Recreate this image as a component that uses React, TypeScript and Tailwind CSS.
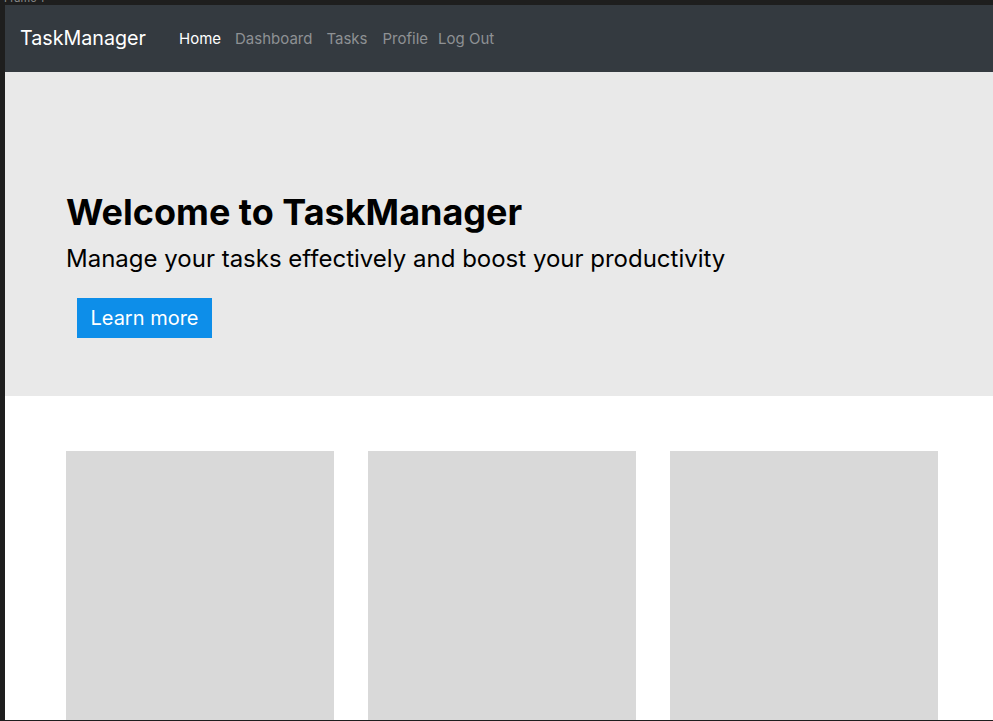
import React from "react";

export default function App() {
  const links = [
    { label: "Home", active: true, cls: "mr-[14px]" },
    { label: "Dashboard", active: false, cls: "mr-[14px]" },
    { label: "Tasks", active: false, cls: "mr-[15px]" },
    { label: "Profile", active: false, cls: "mr-[10px]" },
    { label: "Log Out", active: false, cls: "" },
  ];
  return (
    <div
      className="w-[993px] h-[721px] bg-[#1e1e1e] flex flex-col overflow-hidden"
      style={{ fontFamily: "Inter, 'Noto Sans', sans-serif" }}
    >
      <div className="h-[5px] overflow-hidden pl-[4px]">
        <div className="text-[11px] leading-[11px] -mt-[7px] text-[#8a8a8a]">Frame 1</div>
      </div>
      <div className="flex-1 ml-[5px] mb-[1px] bg-white flex flex-col overflow-hidden">
        <nav className="h-[67px] shrink-0 bg-[#343a40] flex items-center pl-[15px]">
          <span className="text-white text-[19.7px] leading-none mr-[33px]">TaskManager</span>
          <div className="flex items-center text-[15px] leading-none">
            {links.map((l) => (
              <span
                key={l.label}
                className={`${l.cls} ${l.active ? "text-white" : "text-[#8e9194]"}`}
              >
                {l.label}
              </span>
            ))}
          </div>
        </nav>
        <section className="h-[324px] shrink-0 bg-[#e9e9e9] flex flex-col pl-[61px] pt-[118px]">
          <h1 className="text-[36px] font-bold leading-[44px] text-black">Welcome to TaskManager</h1>
          <p className="text-[24px] leading-[32px] text-black mt-[9px]">
            Manage your tasks effectively and boost your productivity
          </p>
          <div className="mt-[23px] ml-[11px]">
            <button className="bg-[#0d8ee9] text-white text-[20px] leading-none w-[135px] h-[40px] flex items-center justify-center">
              Learn more
            </button>
          </div>
        </section>
        <section className="flex gap-[34px] pl-[61px] pt-[55px]">
          <div className="w-[268px] h-[300px] bg-[#d9d9d9]" />
          <div className="w-[268px] h-[300px] bg-[#d9d9d9]" />
          <div className="w-[268px] h-[300px] bg-[#d9d9d9]" />
        </section>
      </div>
    </div>
  );
}
